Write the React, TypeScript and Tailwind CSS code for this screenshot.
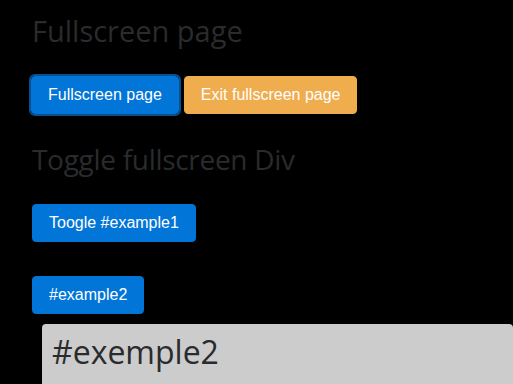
export default function App() {
  const btn =
    "inline-block rounded-[4px] border border-[#0275d8] bg-[#0275d8] px-4 py-2 text-[16px] leading-5 text-white";

  return (
    <div className="h-[384px] overflow-hidden bg-black pl-[32px] pt-[15px] font-['Open_Sans',sans-serif] text-[#292b2c]">
      <h2 className="text-[29px] font-normal leading-[1.1]">Fullscreen page</h2>
      <div className="mt-[29px] flex gap-[4px] font-['Liberation_Sans',Arial,sans-serif]">
        <button className={`${btn} -ml-[1px] outline-2 outline-[#0a4f8f]`}>Fullscreen page</button>
        <button className="ml-[1px] inline-block rounded-[4px] border border-[#f0ad4e] bg-[#f0ad4e] px-4 py-2 text-[16px] leading-5 text-white">
          Exit fullscreen page
        </button>
      </div>

      <h2 className="mt-[30px] text-[28px] font-normal leading-[1.1] tracking-[-0.3px]">
        Toggle fullscreen Div
      </h2>
      <div className="mt-[29px] font-['Liberation_Sans',Arial,sans-serif]">
        <button className={btn}>Toogle #example1</button>
      </div>

      <div className="mt-[34px] font-['Liberation_Sans',Arial,sans-serif]">
        <button className={btn}>#example2</button>
      </div>

      <div className="ml-[10px] mt-[10px] rounded-[4px] bg-[#cccccc] px-[10px] pt-[10px]">
        <h1 className="text-[32px] font-normal leading-[1.1]">#exemple2</h1>
        <p className="mt-[10px] whitespace-nowrap text-[18px]">
          Lorem ipsum dolor sit amet, consectetur adipiscing elit, sed do eiusmod tempor
        </p>
      </div>
    </div>
  );
}
